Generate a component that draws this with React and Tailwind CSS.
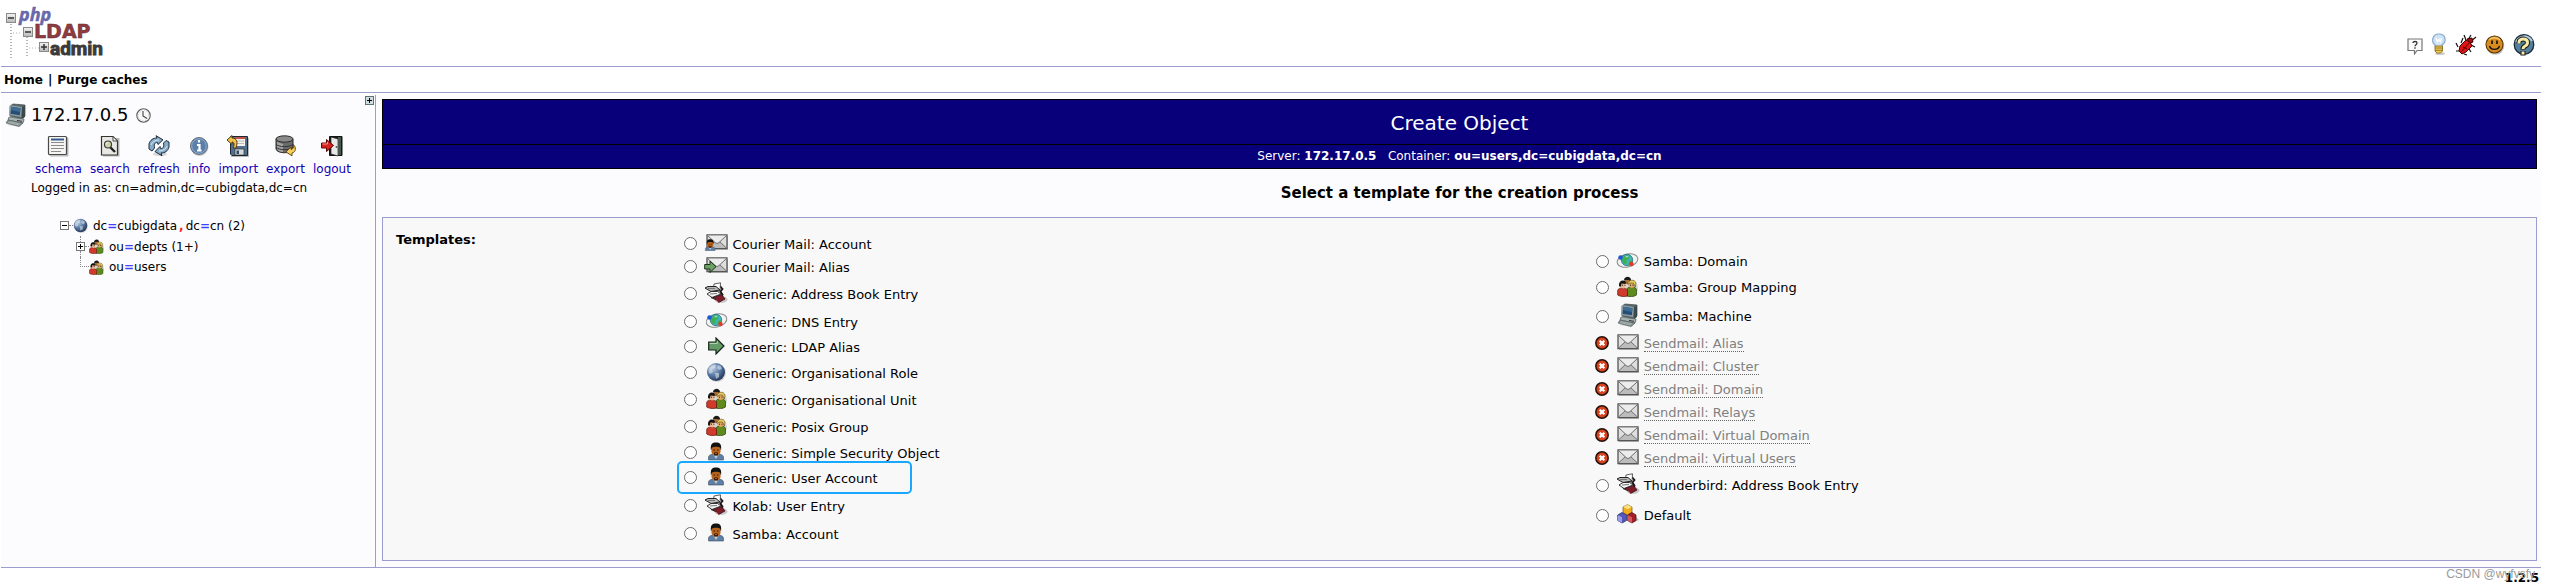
import React from "react";

/* ---------- icons ---------- */

function Logo() {
  return (
    <svg width="110" height="52" viewBox="0 0 110 52" role="img" aria-label="phpLDAPadmin">
      <g stroke="#b5b5b5" fill="none" strokeWidth="2" strokeDasharray="1 2">
        <path d="M6 18V52" />
        <path d="M22 31V52" />
        <path d="M8 27H17" strokeWidth="1" />
        <path d="M24 42H34" strokeWidth="1" />
      </g>
      <defs>
        <linearGradient id="box" x1="0" y1="0" x2="0" y2="1">
          <stop offset="0" stopColor="#f4f4f4" />
          <stop offset="1" stopColor="#b8b8b8" />
        </linearGradient>
      </defs>
      <g fill="url(#box)" stroke="#8a8a8a">
        <rect x="1.500" y="7.500" width="9" height="9" />
        <rect x="18.500" y="21.500" width="9" height="9" />
        <rect x="34.500" y="36.500" width="9" height="9" />
      </g>
      <path d="M3 12H9M20 26H26M36 41H42M39 38V44" stroke="#333" strokeWidth="1.500" />
      <text x="14" y="15" fontFamily="Open Sans, sans-serif" fontSize="18" fontWeight="700" fontStyle="italic" fill="#6a6aae" stroke="#5a5a9a" strokeWidth="0.400">php</text>
      <text x="29" y="32" fontFamily="DejaVu Sans, sans-serif" fontSize="19" fontWeight="700" fill="#8d3c40" stroke="#6e2a2e" strokeWidth="0.500">LDAP</text>
      <text x="45" y="49" fontFamily="Roboto, sans-serif" fontSize="19" fontWeight="700" fill="#3a3a3a" stroke="#3a3a3a" strokeWidth="0.900">admin</text>
    </svg>
  );
}

const Computer = () => (
  <svg width="22" height="24" viewBox="0 0 22 24">
    <path d="M14 14L20 17 15 24 2 22z" fill="#999" opacity=".35" />
    <path d="M5 3L8 1 20 2 20 13 17 16 5 13z" fill="#59666a" stroke="#3b474b" strokeWidth=".7" />
    <path d="M5 2L17 4 16 14 4 12z" fill="#8b9a9c" />
    <path d="M6.300 3.800L15.500 5.300 14.800 12.300 5.500 10.800z" fill="#244d78" />
    <path d="M6.300 3.800L15.500 5.300 15 9 6 7z" fill="#3d6d96" />
    <path d="M17 4L20 3 20 14 17 16z" fill="#3c494b" />
    <path d="M4 14L19 16 18 20 3 17z" fill="#aab5b3" stroke="#505d5f" strokeWidth=".7" />
    <path d="M12 17.500L17 18.300" stroke="#333" />
    <path d="M3 17L18 20 14 23.500 1 20z" fill="#7d8a88" stroke="#505d5f" strokeWidth=".6" />
    <path d="M4 18.500L15 21M3 19.500L14 22" stroke="#c5cdca" strokeWidth=".6" />
  </svg>
);

const Clock = () => (
  <svg width="15" height="15" viewBox="0 0 15 15">
    <circle cx="7.500" cy="7.500" r="6.700" fill="#f8f8f8" stroke="#5c5c5c" strokeWidth="1.100" />
    <circle cx="7.500" cy="7.500" r="5.300" fill="none" stroke="#bbb" strokeWidth="1" strokeDasharray="1 1.770" />
    <path d="M7 3V8L11 10.500" fill="none" stroke="#444" strokeWidth="1.100" />
  </svg>
);

const Schema = () => (
  <svg width="22" height="22" viewBox="0 0 22 22">
    <rect x="2.500" y="2.500" width="19" height="19" rx="1" fill="#bbb" />
    <rect x="1.500" y="1.500" width="18" height="18" rx="1" fill="#f6f5f2" stroke="#4a4a4a" strokeWidth="1.200" />
    <path d="M4 4.500H17" stroke="#36598f" strokeWidth="2" />
    <path d="M4 7.500H17M4 10.500H17M4 13.500H17M4 16.500H14" stroke="#8b8b8b" />
  </svg>
);

const Search = () => (
  <svg width="22" height="22" viewBox="0 0 22 22">
    <path d="M4 3H20.500V21.500H4z" fill="#bbb" />
    <path d="M2.500 1.500H14L18.500 6V20H2.500z" fill="#e9e8e4" stroke="#333" strokeWidth="1.200" />
    <path d="M14 1.500V6H18.500z" fill="#fff" stroke="#444" />
    <path d="M11 12L16 17" stroke="#222" strokeWidth="2.400" />
    <circle cx="9" cy="9.500" r="3.500" fill="#cdd3a6" stroke="#3a3a3a" strokeWidth="1.200" />
    <path d="M7 9.500C7 8 8 7.500 9 7.500" stroke="#fff" fill="none" />
  </svg>
);

const Refresh = () => (
  <svg width="22" height="22" viewBox="0 0 22 22">
    <ellipse cx="12" cy="19" rx="7" ry="2" fill="#bbb" opacity=".6" />
    <path d="M1 14V9C2 5 5 3 9 3L8 .7 15 4.800 10 9.500 9.500 7.500C6 7.500 6 10 6.500 13L4 16z" fill="#86acc9" stroke="#1e2c3a" />
    <path d="M21 7V12C20 16 17 18 13 18L14 20.800 7 16.500 12 11.500 12.500 13.500C16 13.500 16 11 15.500 8L18 5.500z" fill="#86acc9" stroke="#1e2c3a" />
    <path d="M3 10C4 7 7 5 11 5M19 11C18 14 15 16 11 16" fill="none" stroke="#d4e5f1" />
  </svg>
);

const Info = () => (
  <svg width="22" height="22" viewBox="0 0 22 22">
    <circle cx="11.500" cy="12" r="9" fill="#aaa" opacity=".6" />
    <circle cx="11" cy="11" r="8.500" fill="#5b7fa9" stroke="#69737f" />
    <circle cx="11" cy="11" r="7.300" fill="none" stroke="#8eacd0" />
    <path d="M11 5V7.500M9 10H11.500V15M9 15.500H13.500" stroke="#fff" strokeWidth="2.200" fill="none" />
  </svg>
);

const Import = () => (
  <svg width="22" height="22" viewBox="0 0 22 22">
    <path d="M4 3H22V22H4z" fill="#bbb" />
    <path d="M3.500 1.500H20.500V20.500H5L3.500 19z" fill="#526f8c" stroke="#1c2733" />
    <path d="M8 2H18V11H8z" fill="#f4f1ec" />
    <path d="M8 2H18V4H8z" fill="#c0544b" />
    <path d="M9 6H17M9 8.500H17" stroke="#bbb" />
    <path d="M8 14H17V20H8z" fill="#d5d9dc" stroke="#222" strokeWidth=".6" />
    <path d="M9.500 15.500H12V19H9.500z" fill="#34495e" />
    <path d="M0 5L5 .5V3C10 3 11 7 9 13L6 13C8 9 7 7 5 7V9.500z" fill="#f2c24a" stroke="#54390a" />
  </svg>
);

const Export = () => (
  <svg width="22" height="22" viewBox="0 0 22 22">
    <path d="M1 4V14C2 19 17 19 18 14V4z" fill="#6b6b6b" stroke="#2b2b2b" />
    <path d="M2 7V14C3 16 5 17 8 17V9z" fill="#a3a3a3" />
    <path d="M1 9C3 12.500 16 12.500 18 9M1 12C3 15.500 16 15.500 18 12" fill="none" stroke="#333" />
    <ellipse cx="9.500" cy="4" rx="8.500" ry="3.200" fill="#8a8a8a" stroke="#2b2b2b" />
    <path d="M18.500 9.500C21 12 21.500 17 17 18V20.800L11 17 16 12V14.500C18.500 14 18.800 12 18.500 9.500z" fill="#f4cf5c" stroke="#6a4a0c" />
  </svg>
);

const Logout = () => (
  <svg width="22" height="22" viewBox="0 0 22 22">
    <path d="M8.500 1.500H21V20.500H8.500z" fill="#19201e" stroke="#111" />
    <path d="M10 2L17 4V21L10 19z" fill="#e8e8e6" stroke="#222" strokeWidth=".7" />
    <path d="M17 2H20V20H17z" fill="#46574f" />
    <circle cx="15.500" cy="12" r=".9" fill="#555" />
    <path d="M.5 8H5.500V4.500L12.500 10.500 5.500 16.500V13H.5z" fill="#d82020" stroke="#5a0808" />
    <path d="M1.500 9H6.500V7" stroke="#f79a9a" fill="none" />
  </svg>
);

const Globe = ({ size = 20 }) => (
  <svg width={size} height={size} viewBox="0 0 20 20">
    <defs>
      <radialGradient id="globe" cx=".35" cy=".3" r=".8">
        <stop offset="0" stopColor="#b9c9dc" />
        <stop offset=".45" stopColor="#5f7fab" />
        <stop offset="1" stopColor="#16294a" />
      </radialGradient>
    </defs>
    <circle cx="11" cy="11" r="8.800" fill="#aaa" opacity=".5" />
    <circle cx="10" cy="10" r="9" fill="url(#globe)" />
    <path d="M3 6C5 3 8 2 10 3L9 6 6 7 7 10 4 12C2 10 2 8 3 6zM12 3L15 4 16 7 13 8 11 6zM9 11L13 11 13 15 10 17z" fill="#e8eef2" opacity=".55" />
  </svg>
);

const Group = ({ size = 21 }) => (
  <svg width={size} height={size} viewBox="0 0 21 21">
    <ellipse cx="14.500" cy="12" rx="6.500" ry="7.500" fill="#999" opacity=".35" />
    <path d="M7 3.500C8 0 13 -.5 14 3.500L13 5.500H8z" fill="#1c1a17" />
    <path d="M8 4H12.500V8H8z" fill="#a8683a" />
    <path d="M10 20V13C11 10 18.500 10 19.500 13.500V19C17 21 12 21 10 20z" fill="#5f8a1c" stroke="#27400c" strokeWidth=".7" />
    <path d="M11.500 5H17.500V10.500C16.500 12.500 13 12.500 11.500 10z" fill="#dfa860" />
    <path d="M11 8.500C10.500 3.500 18.500 2.500 19 7.500L18.300 11 16.500 7 13 7z" fill="#e8cf62" stroke="#5a4810" strokeWidth=".6" />
    <path d="M.7 19V14.500C1 11 9.500 11 10.500 14.500V20C7 21 3 20.500 .7 19z" fill="#cf3a2b" stroke="#5e120c" strokeWidth=".7" />
    <path d="M3 6H8.500V11C7.500 13 4.500 13 3 10.500z" fill="#eab78d" />
    <path d="M2.200 10.500C.8 4 8 3 9 6.500L8.500 8 4.500 7.500 4 10.500z" fill="#17130f" />
    <path d="M5 9.200H6M7.500 9.200H8.500M13 9.200H14M15.500 9.200H16.500" stroke="#222" />
  </svg>
);

const UserShape = () => (
  <g>
    <path d="M.5 18V15C1 12.500 4 12 8 12C12 12 15 12.500 15.500 15V18z" fill="#5f7fa4" stroke="#3c526c" strokeWidth=".6" />
    <path d="M5 12L8 17 11 12z" fill="#c5cdd6" />
    <path d="M3.500 4H12.500V10C12 14.500 4 14.500 3.500 10z" fill="#b8631d" />
    <path d="M3 8.500C2 2 4.500 .5 8 .5S14 2 13 8.500L12 5.500C10 4.500 6 4.500 4 5.500z" fill="#111" />
    <path d="M5.500 8H7M9 8H10.500" stroke="#301604" strokeWidth="1.100" />
    <path d="M6 13.500V11C6.500 10 9.500 10 10 11V13.500z" fill="#3e1d08" />
    <path d="M7 11.500H9" stroke="#a85a20" />
  </g>
);

const Person = () => (
  <svg width="16" height="19" viewBox="0 0 16 19"><UserShape /></svg>
);

const Envelope = () => (
  <g>
    <path d="M2 2.500H22V16H2z" fill="#aaa" opacity=".7" />
    <path d="M1 1H21V14.500H1z" fill="#dedede" stroke="#555" strokeWidth="1.300" />
    <path d="M1.500 1.500H20.500L11 9z" fill="#ececec" />
    <path d="M1.500 14L8.500 8 11 10 13.500 8 20.500 14z" fill="#bcbcbc" />
    <path d="M1.500 1.500L9 8.500C10.500 9.800 11.500 9.800 13 8.500L20.500 1.500M1.500 14L8 8M20.500 14L14 8" fill="none" stroke="#707070" />
  </g>
);

const Mail = () => (
  <svg width="22" height="16" viewBox="0 0 22 16"><Envelope /></svg>
);

const MailUser = () => (
  <svg width="24" height="17" viewBox="0 0 24 17">
    <g transform="translate(2 0)"><Envelope /></g>
    <g transform="translate(1 5) scale(.65)"><UserShape /></g>
  </svg>
);

const MailAlias = () => (
  <svg width="24" height="17" viewBox="0 0 24 17">
    <g transform="translate(2 0)"><Envelope /></g>
    <path d="M.7 7.500H6V4L12 9.700 6 15.500V12H.7z" fill="#6da065" stroke="#1b3318" />
  </svg>
);

const Book = () => (
  <svg width="24" height="22" viewBox="0 0 24 22">
    <ellipse cx="17" cy="17.500" rx="6.500" ry="3.500" fill="#999" opacity=".5" />
    <path d="M9 15L17.500 12.500 21 17 14.500 20.500z" fill="#7e1c2a" stroke="#2d070d" strokeWidth=".8" />
    <path d="M10 16.500L14.500 20.500" stroke="#c48a90" />
    <path d="M16 4L18.500 7 16.500 9.500 19 13.500" fill="none" stroke="#1d1216" strokeWidth="1.800" />
    <path d="M10 2L16.500 .8 16 9 9 9z" fill="#fff" stroke="#333" strokeWidth=".8" />
    <path d="M1 6L4 4.500 12 4.500 16 8 7 9.500z" fill="#b9b9b9" stroke="#222" />
    <path d="M3 12L7 9.500 13.500 9.500 17 12 8 15.500z" fill="#f4f4f4" stroke="#222" strokeWidth=".9" />
    <path d="M6 12L13 11.500M4 6.500L11 6.500" stroke="#777" />
    <path d="M7 15.500L12 17.500" stroke="#222" strokeWidth="1.200" />
  </svg>
);

const Dns = () => (
  <svg width="23" height="17" viewBox="0 0 23 17">
    <ellipse cx="11.500" cy="8.500" rx="10.500" ry="6.500" fill="#f1f3f3" stroke="#8a8a8a" transform="rotate(-14 11.500 8.500)" />
    <circle cx="11" cy="8" r="5.700" fill="#3fb5b8" stroke="#2b6f74" strokeWidth=".8" />
    <path d="M8 4L12 3.500 13 7 10 8 11 11 8 12 6 8zM13 9L16 8 15 12 12.500 12.500z" fill="#3fae4c" />
    <path d="M9.500 5L12 4.500" stroke="#bdf0d4" />
    <circle cx="4.500" cy="5.500" r="2.200" fill="#1f55d8" />
    <circle cx="15.500" cy="12" r="2.200" fill="#e03a30" />
  </svg>
);

const Arrow = () => (
  <svg width="17" height="18" viewBox="0 0 17 18">
    <path d="M.7 5H8V1L16 9 8 17V13H.7z" fill="#649a68" stroke="#16261a" strokeWidth="1.200" />
    <path d="M1.700 6.500H9.300V4" fill="none" stroke="#b5d3b2" />
  </svg>
);

const Blocked = () => (
  <svg width="14" height="14" viewBox="0 0 14 14" className="-ml-px">
    <circle cx="7" cy="7" r="6.200" fill="#d8431f" stroke="#231008" strokeWidth="1.500" />
    <path d="M4.700 4.700L9.300 9.300M9.300 4.700L4.700 9.300" stroke="#fff" strokeWidth="2.200" />
  </svg>
);

const Cubes = () => (
  <svg width="22" height="20" viewBox="0 0 22 20">
    <path d="M14 19L22 16 18 12z" fill="#777" opacity=".5" />
    <path d="M6 3L10.500 .7 15 3V8.500L10.500 11 6 8.500z" fill="#f3ac1c" stroke="#7d5206" strokeWidth=".7" />
    <path d="M6 3L10.500 5.200 15 3 10.500 .7z" fill="#fde183" />
    <path d="M.7 11L5 8.500 9.500 11V16.500L5 19 .7 16.500z" fill="#5457b8" stroke="#20235e" strokeWidth=".7" />
    <path d="M.7 11L5 13.200V19L.7 16.500z" fill="#9a9ee8" />
    <path d="M10.500 11L15 8.500 19 11V16.500L15 19 10.500 16.500z" fill="#a51e28" stroke="#4a0a10" strokeWidth=".7" />
    <path d="M10.500 11L15 13.200V19L10.500 16.500z" fill="#d35a5e" />
  </svg>
);

const Bubble = () => (
  <svg width="16" height="17" viewBox="0 0 16 17">
    <path d="M1 1H15V12.500H10L7.500 16V12.500H1z" fill="#fafafa" stroke="#777" strokeWidth="1.200" />
    <path d="M6 5C6 3 10 3 10 5S8 6.500 8 8.300M8 9.300V10.700" stroke="#333" strokeWidth="1.300" fill="none" />
  </svg>
);

const Bulb = () => (
  <svg width="16" height="22" viewBox="0 0 16 22">
    <ellipse cx="9" cy="20.500" rx="5" ry="1.500" fill="#999" opacity=".5" />
    <path d="M4 12C0 9 1 1 8 1S16 9 11 12V14H4.500z" fill="#cfe3f7" stroke="#86a6cc" strokeWidth="1.200" />
    <path d="M5 5L6.500 9 8 6.500 9.500 9 10.500 5" stroke="#fff" strokeWidth="1.300" fill="none" />
    <path d="M4 13H11.500V18L9.500 20H6L4 18z" fill="#f1cf55" stroke="#806014" strokeWidth=".8" />
    <path d="M4 15H11.500M4 17.300H11.500" stroke="#806014" strokeWidth=".8" />
  </svg>
);

const Bug = () => (
  <svg width="22" height="22" viewBox="0 0 22 22">
    <path d="M13 6L16 1M15 8L21 3M6 9L8 4M3 13L1 9M4 17L1 17M9 20L12 21M14 15L16 18M16 11L20 13M11 6L9 1" stroke="#111" strokeWidth="1.200" fill="none" />
    <path d="M5 12L11 6 15 8 17 12 11 18 7 20 4 17z" fill="#e21414" stroke="#3a0303" />
    <path d="M12 5L17 4 18 8 15 9z" fill="#b50d0d" stroke="#3a0303" />
    <path d="M6 18L14 9M8 13L12 15" stroke="#500" />
  </svg>
);

const Smile = () => (
  <svg width="20" height="20" viewBox="0 0 20 20">
    <circle cx="10.500" cy="11" r="8.800" fill="#888" opacity=".5" />
    <circle cx="9.500" cy="9.500" r="8.500" fill="#d98c1c" stroke="#5c3908" strokeWidth="1.100" />
    <path d="M4 5C6 2 12 2 15 5" stroke="#f3c66a" strokeWidth="1.300" fill="none" />
    <path d="M7 5.500V9M12 5.500V9" stroke="#111" strokeWidth="1.700" />
    <path d="M4.500 11C6 15.500 13 15.500 14.500 11" stroke="#111" strokeWidth="1.400" fill="none" />
  </svg>
);

const Help = () => (
  <svg width="22" height="22" viewBox="0 0 22 22">
    <circle cx="11" cy="10.500" r="9.800" fill="#557d9c" stroke="#1b2c3c" strokeWidth="1.300" />
    <path d="M3 8C5 2 15 0 19 7" stroke="#b5d0e0" strokeWidth="2" fill="none" />
    <path d="M6 9.500V8C6 4 14.500 4 14.500 8.500S10 11 10 15V15.500M10 17V21.500" stroke="#1a1a1a" strokeWidth="5" fill="none" />
    <path d="M6 9.500V8C6 4 14.500 4 14.500 8.500S10 11 10 15M10 17.500V20.500" stroke="#f7eba4" strokeWidth="3" fill="none" />
  </svg>
);

const Toggle = ({ open }) => (
  <svg width="9" height="9" viewBox="0 0 9 9">
    <rect x=".5" y=".5" width="8" height="8" fill="#fff" stroke="#777" />
    <path d="M2 4.500H7" stroke="#000" />
    {!open && <path d="M4.500 2V7" stroke="#000" />}
  </svg>
);

/* ---------- data ---------- */

const leftTemplates = [
  ["Courier Mail: Account", MailUser, "h-[23px]"],
  ["Courier Mail: Alias", MailAlias, "h-[23px]"],
  ["Generic: Address Book Entry", Book, "h-[31px]"],
  ["Generic: DNS Entry", Dns, "h-[25px]"],
  ["Generic: LDAP Alias", Arrow, "h-[25px]"],
  ["Generic: Organisational Role", Globe, "h-[27px]"],
  ["Generic: Organisational Unit", Group, "h-[27px]"],
  ["Generic: Posix Group", Group, "h-[27px]"],
  ["Generic: Simple Security Object", Person, "h-[25px]"],
  ["Generic: User Account", Person, "h-[25px]", "marked"],
  ["Kolab: User Entry", Book, "h-[31px]"],
  ["Samba: Account", Person, "h-[25px]"],
];

const rightTemplates = [
  ["Samba: Domain", Dns, "h-[25px]"],
  ["Samba: Group Mapping", Group, "h-[27px]"],
  ["Samba: Machine", Computer, "h-[31px]"],
  ["Sendmail: Alias", Mail, "h-[23px]", "disabled"],
  ["Sendmail: Cluster", Mail, "h-[23px]", "disabled"],
  ["Sendmail: Domain", Mail, "h-[23px]", "disabled"],
  ["Sendmail: Relays", Mail, "h-[23px]", "disabled"],
  ["Sendmail: Virtual Domain", Mail, "h-[23px]", "disabled"],
  ["Sendmail: Virtual Users", Mail, "h-[23px]", "disabled"],
  ["Thunderbird: Address Book Entry", Book, "h-[31px]"],
  ["Default", Cubes, "h-[29px]"],
];

const tools = [
  ["schema", Schema],
  ["search", Search],
  ["refresh", Refresh],
  ["info", Info],
  ["import", Import],
  ["export", Export],
  ["logout", Logout],
];

/* ---------- parts ---------- */

function TemplateRow({ item }) {
  const [name, Icon, height, state] = item;
  const disabled = state === "disabled";
  const Wrap = disabled ? "div" : "label";
  return (
    <li className={`${height} relative flex w-fit items-center`}>
      {state === "marked" && (
        <span className="pointer-events-none absolute -inset-y-1 -left-[7px] w-[235px] rounded-[5px] border-2 border-[#18a8ff]" />
      )}
      <Wrap className="flex items-center">
        {disabled ? (
          <Blocked />
        ) : (
          <input
            type="radio"
            name="template"
            value={name}
            className="size-[13px] appearance-none rounded-full border border-[#6b6b6b] bg-white checked:border-4 checked:border-[#0a6cff]"
          />
        )}
        <span className="ml-[7px] flex w-6 justify-center pb-0.5">
          <Icon />
        </span>
        <span className="ml-1 pt-0.5 text-[13px] leading-4 whitespace-nowrap">
          {disabled ? (
            <abbr className="inline-block border-b border-dotted border-[#666] leading-[14px] text-[#808080] no-underline">
              {name}
            </abbr>
          ) : (
            name
          )}
        </span>
      </Wrap>
    </li>
  );
}

const Eq = () => <span className="font-bold text-[#4040ff]">=</span>;

function Sidebar() {
  return (
    <aside className="relative w-[375px] shrink-0 border-r border-[#9c9cce] pl-1">
      <button
        type="button"
        aria-label="Expand tree"
        className="absolute top-px right-px flex size-[9px] items-center justify-center bg-[#cfdde0] outline outline-1 -outline-offset-1 outline-[#5d7378]"
      >
        <svg width="9" height="9" viewBox="0 0 9 9">
          <path d="M2 4.500H7M4.500 2V7" stroke="#000" />
        </svg>
      </button>
      <div className="flex items-center pt-2">
        <Computer />
        <h1 className="ml-1 text-[18px] leading-6">172.17.0.5</h1>
        <span className="ml-2"><Clock /></span>
      </div>
      <nav className="flex gap-2 pt-2 pl-[30px]">
        {tools.map(([name, Icon]) => (
          <a key={name} href={`#${name}`} className="flex flex-col items-center text-[12px] leading-4 text-[#1400b4]">
            <Icon />
            <span className="pt-1">{name}</span>
          </a>
        ))}
      </nav>
      <p className="pt-[3px] pl-[26px] text-[12px] leading-4">Logged in as: cn=admin,dc=cubigdata,dc=cn</p>
      <ul className="pt-[19px] pl-[55px] text-[12px]">
        <li className="flex h-[21px] items-center">
          <Toggle open />
          <span className="w-1 border-t border-dotted border-[#888]" />
          <Globe size={15} />
          <a href="#root-dn" className="ml-[5px]">
            dc<Eq />cubigdata<span className="px-0.5 font-bold text-[#ff2020]">,</span>dc<Eq />cn (2)
          </a>
        </li>
        <li className="flex h-[21px] items-center pl-4">
          <span className="flex flex-col items-center">
            <span className="h-1.5 border-l border-dotted border-[#888]" />
            <Toggle />
            <span className="h-1.5 border-l border-dotted border-[#888]" />
          </span>
          <span className="w-1 border-t border-dotted border-[#888]" />
          <Group size={15} />
          <a href="#depts" className="ml-[5px]">ou<Eq />depts (1+)</a>
        </li>
        <li className="flex h-[20px] items-center pl-5">
          <span className="mb-2.5 h-2.5 w-[9px] border-b border-l border-dotted border-[#888]" />
          <Group size={15} />
          <a href="#users" className="ml-[5px]">ou<Eq />users</a>
        </li>
      </ul>
    </aside>
  );
}

export default function App() {
  return (
    <div className="relative bg-white pr-2 pl-px font-['DejaVu_Sans',Verdana,sans-serif] text-black">
      <header className="flex h-[67px] items-end justify-between border-b border-[#9c9cce] pb-2.5 pl-1">
        <a href="#home" className="self-start pt-1.5"><Logo /></a>
        <div className="flex items-center gap-2 pr-1.5">
          <a href="#feature" aria-label="Request feature" className="pt-1"><Bubble /></a>
          <a href="#light" aria-label="Light" className="pb-px"><Bulb /></a>
          <a href="#bug" aria-label="Report a bug"><Bug /></a>
          <a href="#donate" aria-label="Donate"><Smile /></a>
          <a href="#help" aria-label="Help"><Help /></a>
        </div>
      </header>
      <nav className="flex h-[26px] items-center gap-[5px] border-b border-[#9c9cce] pl-[3px] text-[12px] font-bold">
        <a href="#home">Home</a>
        <span>|</span>
        <a href="#purge">Purge caches</a>
      </nav>

      <div className="mt-0.5 flex border-b border-[#9c9cce] bg-[#fcfcfe]">
        <Sidebar />
        <main className="min-w-0 flex-1 pt-1 pr-1 pb-1.5 pl-1.5">
          <div className="border border-black bg-[#08007b] text-center text-white">
            <h2 className="border-b border-black pt-2.5 pb-2 text-[20px] leading-[26px]">Create Object</h2>
            <p className="py-[3px] text-[12px] leading-[17px]">
              Server: <b>172.17.0.5</b> &nbsp; Container: <b>ou=users,dc=cubigdata,dc=cn</b>
            </p>
          </div>
          <h3 className="py-[14px] text-center text-[15px] leading-5 font-bold">
            Select a template for the creation process
          </h3>
          <form className="grid grid-cols-[14fr_42fr_44fr] border border-[#9c9cce] bg-[#f8f8f8] pt-3.5 pb-3.5">
            <h4 className="pl-[13px] text-[13px] leading-4 font-bold">Templates:</h4>
            <ul>
              {leftTemplates.map((t) => <TemplateRow key={t[0]} item={t} />)}
            </ul>
            <ul className="self-center pl-[7px]">
              {rightTemplates.map((t) => <TemplateRow key={t[0]} item={t} />)}
            </ul>
          </form>
        </main>
      </div>

      <footer className="pt-0.5 pr-0.5 text-right text-[12px] leading-4 font-bold">1.2.5</footer>
      <span className="pointer-events-none absolute right-3.5 bottom-0 pb-1 font-['Liberation_Sans',Arial,sans-serif] text-[12px] leading-4 text-[#9a9a9a]">
        CSDN @wyfvsfy
      </span>
    </div>
  );
}
